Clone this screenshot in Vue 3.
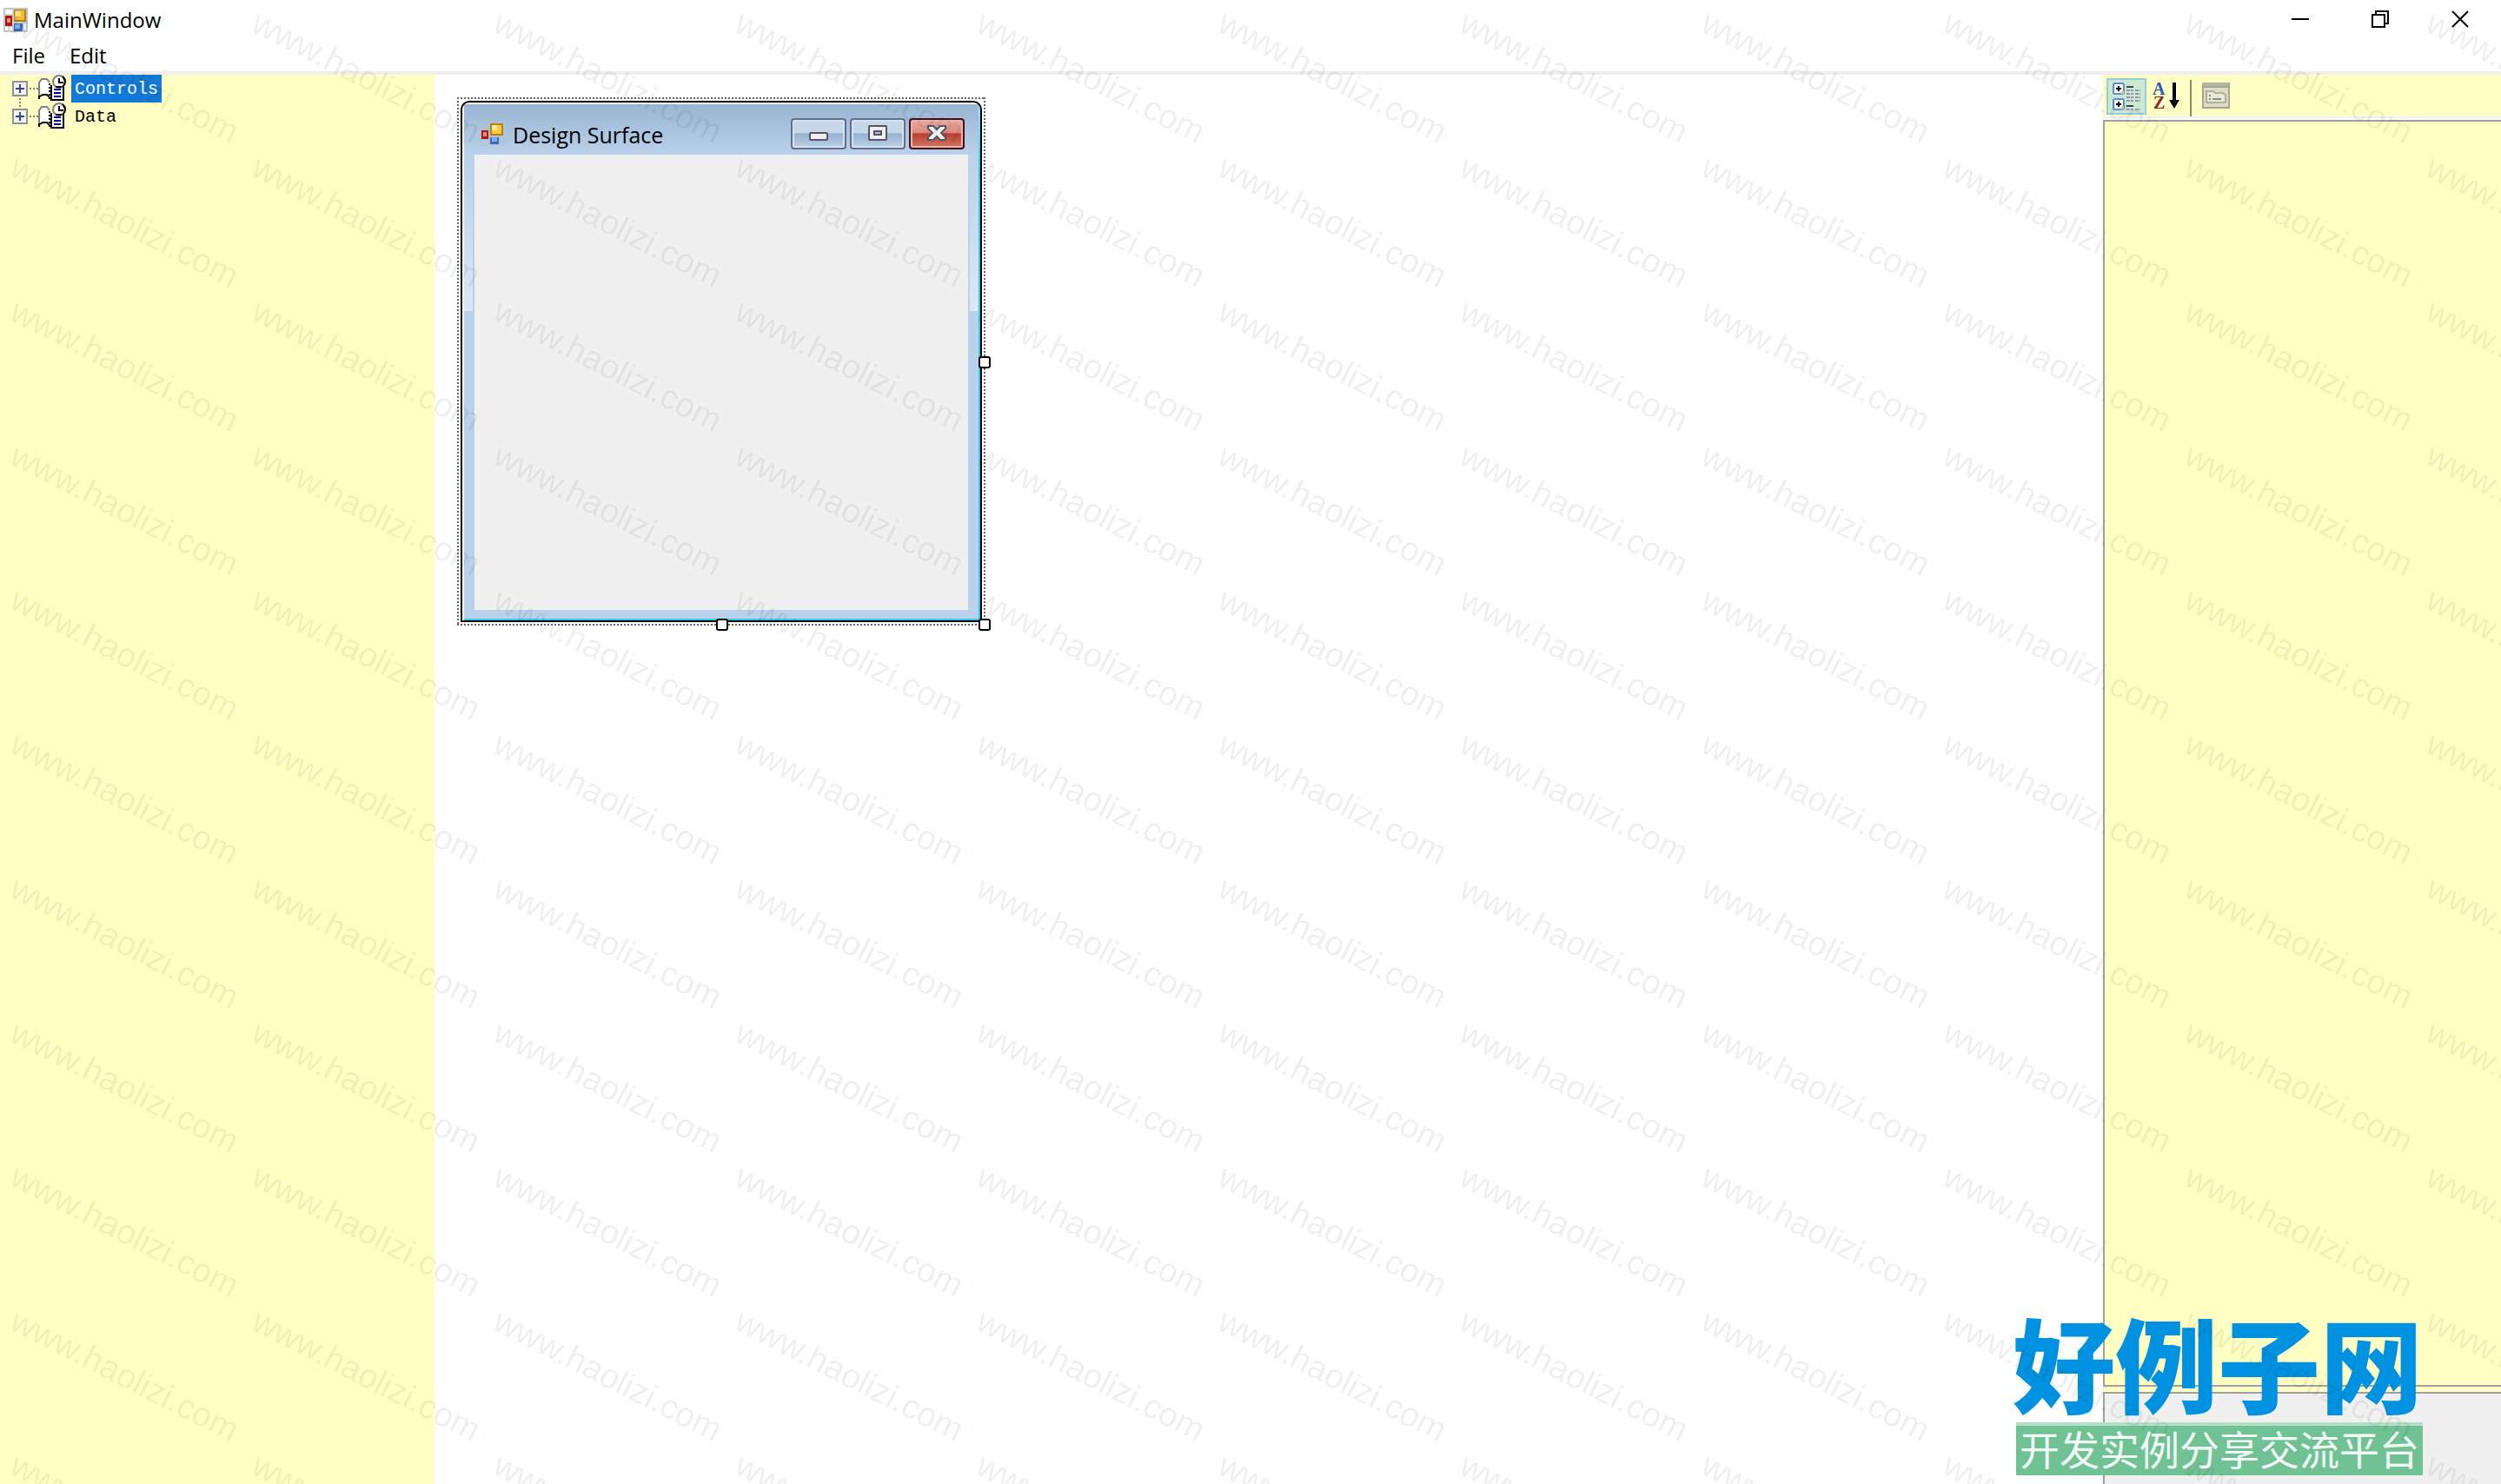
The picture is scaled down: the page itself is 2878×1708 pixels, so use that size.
<script setup>
import { ref } from 'vue'

const menus = ['File', 'Edit']
const nodes = ['Controls', 'Data']
const selected = ref('Controls')
const sortMode = ref('category')
const markCount = 11 * 11
</script>

<template>
  <div class="app">
    <header class="titlebar">
      <svg class="form-icon" viewBox="0 0 28 28" aria-hidden="true">
        <rect x="1" y="1" width="26" height="26" fill="#fff" stroke="#c4c4c4" stroke-width="2" />
        <path d="M11 1v26M1 8h10M1 21h10M11 17h16M23 17v10M6 21v6" stroke="#cfcfcf" stroke-width="2" />
        <rect x="12" y="2" width="14" height="14" fill="#b58312" />
        <rect x="13" y="3" width="11" height="11" fill="#f5bd2c" />
        <rect x="14" y="4" width="6" height="6" fill="#ffe08a" />
        <rect x="2" y="9" width="8" height="12" fill="#a81a12" />
        <rect x="4" y="12" width="4" height="5" fill="#ee8a84" />
        <rect x="12" y="18" width="10" height="9" fill="#3a6cc4" />
        <rect x="13" y="19" width="6" height="5" fill="#82acf0" />
      </svg>
      <h1 class="app-title">MainWindow</h1>
      <div class="window-buttons">
        <button type="button" aria-label="Minimize">
          <svg viewBox="0 0 20 20"><path d="M0 10h20" /></svg>
        </button>
        <button type="button" aria-label="Restore">
          <svg viewBox="0 0 20 20"><path d="M1 5h14v14H1zM5 5V1h14v14h-4" /></svg>
        </button>
        <button type="button" aria-label="Close">
          <svg viewBox="0 0 20 20"><path d="M1 1l18 18M19 1L1 19" /></svg>
        </button>
      </div>
    </header>

    <nav class="menubar">
      <button v-for="m in menus" :key="m" type="button">{{ m }}</button>
    </nav>

    <main class="workspace">
      <aside class="toolbox">
        <ul class="tree">
          <li v-for="n in nodes" :key="n">
            <button type="button" class="expander" :aria-label="'Expand ' + n">
              <svg viewBox="0 0 18 18">
                <rect x="1" y="1" width="16" height="16" fill="#f2f2f2" stroke="#919191" stroke-width="2" />
                <path d="M4 9h10M9 4v10" stroke="#2c4a98" stroke-width="2" />
              </svg>
            </button>
            <span class="branch"></span>
            <svg class="node-icon" viewBox="0 0 32 32" aria-hidden="true">
              <path d="M1 26V9l3-4h6l3 4v16l-3-3H5l-4 5z" fill="#fff" />
              <path d="M1 25V9l3-4h6l3 4" fill="none" stroke="#808080" stroke-width="2" />
              <path d="M1 28v-4M2 25l3-2h5l3 3" fill="none" stroke="#000" stroke-width="2" />
              <path d="M13 10v18" fill="none" stroke="#000" stroke-width="2" stroke-dasharray="2 2" />
              <path d="M15 13h14v16H15z" fill="#fff" />
              <path d="M15 12v17h14V13" fill="none" stroke="#000" stroke-width="2" />
              <path d="M18 17h8M18 21h8M18 25h8" stroke="#000090" stroke-width="2" />
              <circle cx="24" cy="8" r="7" fill="#fff" stroke="#808080" stroke-width="2" />
              <path d="M28 2q3 3 3 6t-3 6M20 14h7" fill="none" stroke="#000" stroke-width="2" />
              <path d="M24 4v5h5" fill="none" stroke="#000" stroke-width="2" />
            </svg>
            <button
              type="button"
              class="node-label"
              :class="{ active: selected === n }"
              @click="selected = n"
            >{{ n }}</button>
          </li>
        </ul>
      </aside>

      <section class="canvas">
        <div class="selection">
          <div class="form">
            <div class="form-head">
              <svg class="form-icon" viewBox="0 0 28 28" aria-hidden="true">
                <path d="M1 1h26v26H1zM11 1v26M1 8h10M1 21h10M11 17h16M23 17v10" fill="none" stroke="#b9bdc4" stroke-width="1" />
                <rect x="12" y="2" width="15" height="14" fill="#b58312" />
                <rect x="14" y="4" width="11" height="10" fill="#f9c93e" />
                <rect x="14" y="4" width="6" height="6" fill="#ffe79c" />
                <rect x="2" y="10" width="8" height="10" fill="#a81a12" />
                <rect x="4" y="12" width="4" height="5" fill="#ee8a84" />
                <rect x="12" y="18" width="10" height="8" fill="#3a6cc4" />
                <rect x="14" y="18" width="6" height="5" fill="#82acf0" />
              </svg>
              <h2 class="form-title">Design Surface</h2>
              <div class="form-buttons">
                <button type="button" aria-label="Minimize form">
                  <svg viewBox="0 0 22 20"><rect x="1" y="9" width="20" height="8" rx="1" fill="#f0f0f0" stroke="#545666" stroke-width="2" /></svg>
                </button>
                <button type="button" aria-label="Maximize form">
                  <svg viewBox="0 0 22 20">
                    <rect x="1" y="1" width="20" height="16" rx="1" fill="#f0f0f0" stroke="#545666" stroke-width="2" />
                    <rect x="7" y="7" width="8" height="4" fill="#a9c0dc" stroke="#545666" stroke-width="2" />
                  </svg>
                </button>
                <button type="button" class="close" aria-label="Close form">
                  <svg viewBox="0 0 22 20">
                    <path d="M1 1h6l4 4 4-4h6v3l-5 5 5 5v3h-6l-4-4-4 4H1v-3l5-5-5-5z" fill="#f0f0f0" stroke="#545666" stroke-width="2" />
                  </svg>
                </button>
              </div>
            </div>
            <div class="form-body"></div>
          </div>
          <i class="handle east"></i>
          <i class="handle south"></i>
          <i class="handle corner"></i>
        </div>
      </section>

      <aside class="properties">
        <div class="toolbar">
          <button
            type="button"
            class="tool"
            :class="{ active: sortMode === 'category' }"
            aria-label="Categorized"
            @click="sortMode = 'category'"
          >
            <svg viewBox="0 0 32 32">
              <g fill="#fff" stroke="#5a8fd0" stroke-width="2">
                <rect x="1" y="1" width="12" height="12" rx="2" />
                <rect x="1" y="19" width="12" height="12" rx="2" />
              </g>
              <path d="M9 12h3V9M9 30h3v-3" fill="none" stroke="#c8c0a8" stroke-width="2" />
              <path d="M4 7h6M7 4v6M4 25h6M7 22v6" stroke="#000" stroke-width="2" />
              <path d="M16 5h8M16 27h8" stroke="#444" stroke-width="2" />
              <path d="M16 9h8M16 13h8M16 17h8M16 21h8M16 31h8M26 9h6M26 13h6M26 17h6M26 21h6M26 31h6" stroke="#9a90bc" stroke-width="2" stroke-dasharray="4 1" />
            </svg>
          </button>
          <button
            type="button"
            class="tool"
            :class="{ active: sortMode === 'alpha' }"
            aria-label="Alphabetical"
            @click="sortMode = 'alpha'"
          >
            <svg viewBox="0 0 32 32">
              <text x="0" y="14" class="letter" fill="#2f55b4">A</text>
              <text x="1" y="30" class="letter" fill="#8c2630">Z</text>
              <path d="M25 0v28" stroke="#fff" stroke-width="6" />
              <path d="M18 19h14l-7 13z" fill="#fff" />
              <path d="M25 0v24" stroke="#000" stroke-width="4" />
              <path d="M19 20h12l-6 10z" fill="#000" />
            </svg>
          </button>
          <span class="divider"></span>
          <button type="button" class="tool" aria-label="Property pages" disabled>
            <svg viewBox="0 0 32 32">
              <rect width="32" height="30" fill="#a5a590" />
              <rect width="30" height="4" fill="#b4b4a0" />
              <rect x="2" y="6" width="28" height="22" fill="#dcdcc8" />
              <path d="M5 10h8l2 2h9l3 2v9H5z" fill="#e8e8d6" stroke="#b0b09c" stroke-width="2" />
              <path d="M8 15h2M8 19h2M12 19h10" stroke="#8a8a78" stroke-width="2" />
            </svg>
          </button>
        </div>
        <div class="grid-view"></div>
        <div class="help-view"></div>
      </aside>
    </main>

    <div class="brand">
      <strong class="brand-name">好例子网</strong>
      <span class="brand-tag">开发实例分享交流平台</span>
    </div>

    <div class="marks" aria-hidden="true">
      <div v-for="i in markCount" :key="i" class="mark"><span>www.haolizi.com</span></div>
    </div>
  </div>
</template>

<style>
body {
  margin: 0;
}
</style>

<style scoped>
.app {
  position: relative;
  display: flex;
  flex-direction: column;
  min-height: 100vh;
  overflow: hidden;
  background: #fff;
  color: #000;
  font-family: "Open Sans", "Noto Sans", sans-serif;
  font-size: 24px;
}

button {
  margin: 0;
  padding: 0;
  border: 0;
  background: none;
  color: inherit;
  font: inherit;
}

svg {
  display: block;
}

h1,
h2 {
  margin: 0;
  font-size: 24px;
  font-weight: 400;
  line-height: 32px;
}

.titlebar {
  display: flex;
  align-items: center;
  height: 46px;
  padding-left: 4px;
  gap: 7px;
}

.form-icon {
  width: 28px;
  height: 28px;
}

.window-buttons {
  display: flex;
  align-self: flex-start;
  margin-left: auto;
  padding-right: 1px;
}

.window-buttons button {
  display: grid;
  place-items: center;
  width: 92px;
  height: 44px;
}

.window-buttons svg {
  width: 20px;
  height: 20px;
  fill: none;
  stroke: #000;
  stroke-width: 2;
}

.menubar {
  display: flex;
  gap: 28px;
  height: 36px;
  padding-left: 14px;
  border-bottom: 4px solid #efefef;
}

.menubar button {
  line-height: 36px;
}

.workspace {
  display: flex;
  flex: 1;
}

.toolbox {
  width: 500px;
  background: #ffffc3;
}

.tree {
  margin: 0;
  padding: 0 0 0 14px;
  list-style: none;
}

.tree li {
  position: relative;
  display: flex;
  align-items: center;
  height: 32px;
}

.tree li + li::before {
  content: "";
  position: absolute;
  left: 8px;
  top: -5px;
  width: 2px;
  height: 12px;
  background: repeating-linear-gradient(#808080 0 2px, transparent 2px 4px);
}

.expander svg {
  width: 18px;
  height: 18px;
}

.branch {
  width: 10px;
  height: 2px;
  margin: 0 0 0 2px;
  background: repeating-linear-gradient(90deg, #808080 0 2px, transparent 2px 4px);
}

.node-icon {
  width: 32px;
  height: 32px;
}

.node-label {
  box-sizing: border-box;
  height: 32px;
  margin-left: 6px;
  padding: 2px 4px 0;
  font-family: "Liberation Mono", monospace;
  font-size: 20px;
  line-height: 30px;
}

.node-label.active {
  background: #1379d7;
  color: #fff;
}

.canvas {
  flex: 1;
  padding: 26px;
}

.selection {
  position: relative;
  width: 600px;
  padding: 4px;
  background:
    repeating-linear-gradient(90deg, #666 0 2px, transparent 2px 4px) top / 100% 2px no-repeat,
    repeating-linear-gradient(90deg, #666 0 2px, transparent 2px 4px) bottom / 100% 2px no-repeat,
    repeating-linear-gradient(#666 0 2px, transparent 2px 4px) left / 2px 100% no-repeat,
    repeating-linear-gradient(#666 0 2px, transparent 2px 4px) right / 2px 100% no-repeat;
}

.form {
  box-sizing: border-box;
  padding: 2px 14px 12px;
  border: 2px solid #000;
  border-radius: 10px 10px 0 0;
  background:
    linear-gradient(90deg, #fff, #fff) top / 100% 2px no-repeat,
    linear-gradient(#fff, #fff) left / 2px 100% no-repeat,
    linear-gradient(#36c9ea, #36c9ea) bottom / 100% 2px no-repeat,
    linear-gradient(#9fe4f0, #36c9ea 80px) right / 2px 100% no-repeat,
    linear-gradient(transparent 60px, #dce8f4) left 2px top / 10px 240px no-repeat,
    linear-gradient(transparent 60px, #dce8f4) right 2px top / 10px 240px no-repeat,
    linear-gradient(#99b4d1, #b9d1ea 60px) top / 100% 60px no-repeat,
    #b9d1ea;
}

.form-head {
  display: flex;
  align-items: center;
  height: 58px;
  margin-right: -4px;
  margin-left: -2px;
  padding: 0 8px;
  gap: 10px;
}

.form-head .form-icon {
  margin-top: 10px;
}

.form-title {
  margin-top: 12px;
  font-size: 25px;
}

.form-buttons {
  display: flex;
  gap: 4px;
  margin: 10px 0 0 auto;
}

.form-buttons button {
  display: grid;
  place-items: center;
  width: 64px;
  height: 36px;
  border: 2px solid #62708c;
  border-radius: 4px;
  background: linear-gradient(#c6d7e9 0 46%, #98b1cf 50%, #bad1e9);
  box-shadow: inset 0 0 0 2px #d5e2f0;
}

.form-buttons .close {
  border-color: #43101c;
  background: linear-gradient(#e8aaa0, #dc8a7c 46%, #b8402c 50%, #d07868);
  box-shadow: inset 0 0 0 2px #e8b4ac;
}

.form-buttons svg {
  width: 22px;
  height: 20px;
}

.form-body {
  height: 524px;
  background: #f0f0f0;
}

.handle {
  position: absolute;
  width: 10px;
  height: 10px;
  border: 2px solid #000;
  border-radius: 3px;
  background: #fff;
}

.east {
  top: calc(50% - 6px);
  right: -6px;
}

.south {
  bottom: -6px;
  left: calc(50% - 6px);
}

.corner {
  right: -6px;
  bottom: -6px;
}

.properties {
  display: flex;
  flex-direction: column;
  width: 458px;
  background: #ffffc3;
}

.toolbar {
  display: flex;
  align-items: center;
  height: 44px;
  padding: 3px 4px 1px;
  border-bottom: 2px solid #eef1f8;
  box-shadow: 0 2px #fff;
}

.tool {
  display: grid;
  place-items: center;
  box-sizing: border-box;
  width: 46px;
  height: 42px;
  border: 2px solid transparent;
}

.tool.active {
  border-color: #92cde0;
  background: #cce8cf;
}

.tool svg {
  width: 32px;
  height: 32px;
}

.letter {
  font-family: "Liberation Serif", serif;
  font-size: 20px;
  font-weight: 700;
}

.divider {
  width: 2px;
  height: 42px;
  margin: 4px 5px 0 4px;
  background: #8c8c6c;
}

.grid-view {
  flex: 1;
  margin-top: 2px;
  border: 2px solid #a0a0a0;
  border-right: 0;
}

.help-view {
  height: 104px;
  margin-top: 6px;
  border: solid #a0a0a0;
  border-width: 2px 0 0 2px;
  background: #f0f0f0;
}

.brand {
  position: absolute;
  right: 90px;
  bottom: 10px;
  display: flex;
  flex-direction: column;
  align-items: flex-end;
  gap: 8px;
  font-family: "Noto Sans CJK SC", sans-serif;
}

.brand-name {
  color: #0092e0;
  font-size: 118px;
  font-weight: 900;
  line-height: 124px;
}

.brand-tag {
  padding: 0 4px 7px;
  border-top: 4px solid #b4e0c8;
  background: #70c294;
  color: #f2fbf5;
  font-size: 46px;
  line-height: 50px;
}

.marks {
  position: absolute;
  inset: 0;
  display: grid;
  grid-template-columns: repeat(11, 278px);
  grid-auto-rows: 166px;
  overflow: hidden;
  pointer-events: none;
}

.mark {
  padding: 2px 0 0 9px;
  color: rgba(0, 0, 0, 0.07);
  font-family: "Liberation Sans", Arial, sans-serif;
  font-size: 39px;
  line-height: 40px;
  white-space: nowrap;
}

.mark span {
  display: inline-block;
  transform: rotate(27deg);
  transform-origin: 0 33px;
}
</style>
